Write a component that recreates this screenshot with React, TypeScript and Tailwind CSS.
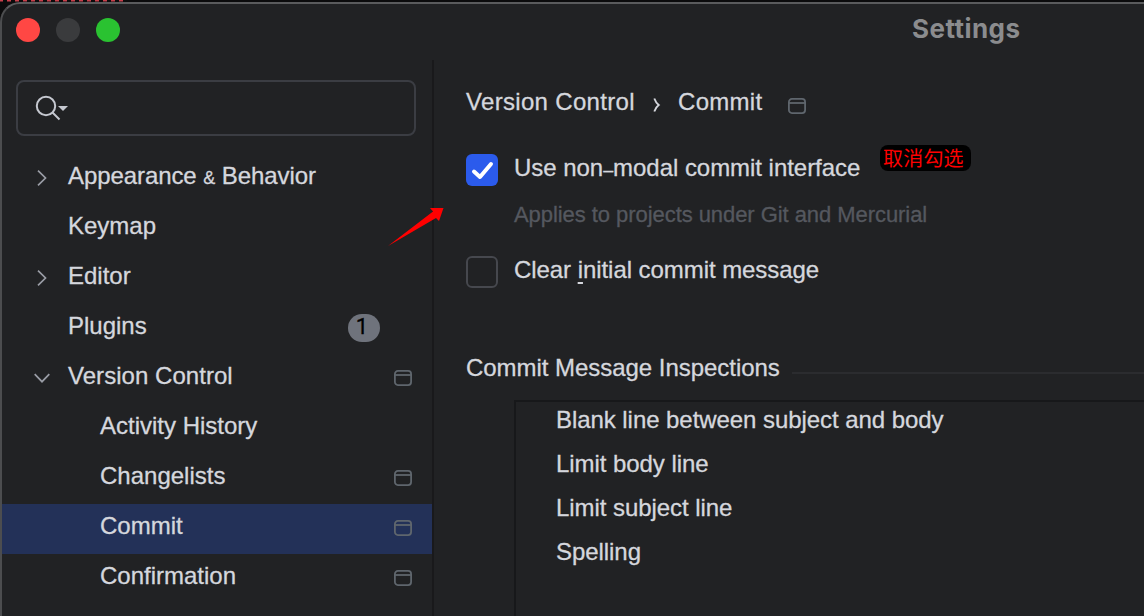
import React from "react";

function WindowIcon() {
  return (
    <svg width="18" height="16" viewBox="0 0 18 16" fill="none" stroke="#5f666d" strokeWidth="1.8" className="block shrink-0">
      <rect x="0.9" y="0.9" width="16.2" height="14.2" rx="3" />
      <path d="M1 5h16" />
    </svg>
  );
}

function Chevron({ open }: { open?: boolean }) {
  return (
    <svg width="16" height="16" viewBox="0 0 16 16" fill="none" stroke="#9a9da6" strokeWidth="1.7" className="block">
      <path d={open ? "M0.7 4.2L8 11.700L15.300 4.200" : "M5 0.700L12.500 8L5 15.300"} transform={open ? undefined : "translate(-1 0)"} />
    </svg>
  );
}

type Item = {
  label: React.ReactNode;
  track?: string;
  arrow?: "open" | "closed";
  child?: boolean;
  icon?: boolean;
  badge?: string;
  selected?: boolean;
};

const items: Item[] = [
  {
    label: (
      <>
        Appearance <span className="text-[18px]">&amp;</span> Behavior
      </>
    ),
    track: "tracking-[-0.080px]",
    arrow: "closed",
  },
  { label: "Keymap" },
  { label: "Editor", arrow: "closed" },
  { label: "Plugins", badge: "1" },
  { label: "Version Control", track: "tracking-[0.040px]", arrow: "open", icon: true },
  { label: "Activity History", child: true },
  { label: "Changelists", child: true, icon: true },
  { label: "Commit", child: true, icon: true, selected: true },
  { label: "Confirmation", child: true, icon: true },
];

function Row({ item }: { item: Item }) {
  return (
    <div className={`flex h-[50px] items-start pr-5 ${item.selected ? "bg-[#233158]" : ""}`}>
      <div className={`flex h-12 shrink-0 items-center pl-8 ${item.child ? "w-[98px]" : "w-[66px]"}`}>
        {item.arrow && <Chevron open={item.arrow === "open"} />}
      </div>
      <span className={`grow leading-[44px] ${item.track ?? ""}`}>{item.label}</span>
      {item.badge && (
        <span className="mr-8 mt-2.5 flex h-7 w-8 justify-center rounded-full bg-[#6f737c] pr-1 font-['Roboto',sans-serif] text-[22px] leading-[26px] text-black">
          {item.badge}
        </span>
      )}
      {item.icon && (
        <div className="flex h-12 items-center">
          <WindowIcon />
        </div>
      )}
    </div>
  );
}

export default function App() {
  return (
    <div className="relative h-[616px] w-[1144px] overflow-hidden bg-[#0b0b0c] pt-0.5 font-['Liberation_Sans',Arial,sans-serif] text-[24px] text-[#d5d7dd] [-webkit-text-stroke:0.3px]">
      <svg className="absolute left-0 top-0" width="124" height="2">
        <path d="M-1 0.800H124" stroke="#c9404c" strokeWidth="1.600" strokeDasharray="4 4" />
      </svg>
      <div className="flex h-[620px] w-[1170px] flex-col rounded-tl-[20px] border-2 border-[#4c4d4f] border-t-[#5a5b5d] bg-[#212224]">
        <header className="flex h-14 shrink-0 items-start">
          <div className="ml-3.5 mt-3.5 flex w-[896px] gap-4">
            <span className="size-6 rounded-full bg-[#ff4744]" />
            <span className="size-6 rounded-full bg-[#3a3b3d]" />
            <span className="size-6 rounded-full bg-[#2ac231]" />
          </div>
          <h1 className="font-['Inter',sans-serif] text-[26px] font-bold leading-[50px] tracking-[0.450px] text-[#8b8c8e] [-webkit-text-stroke:0px]">
            Settings
          </h1>
        </header>

        <div className="flex grow">
          <aside className="w-[432px] shrink-0 border-r-2 border-[#19191b]">
            <div className="ml-3.5 mt-5 flex h-14 w-[400px] items-center rounded-lg border-2 border-[#3b3d43] pl-4">
              <svg width="34" height="26" viewBox="0 0 34 26" fill="none" stroke="#c5c8d0" strokeWidth="2">
                <circle cx="12" cy="11" r="9.200" />
                <path d="M18.500 17.500L25.500 24.500" />
                <path d="M24 11h10l-5 5z" fill="#c5c8d0" stroke="none" />
              </svg>
            </div>
            <nav className="mt-[18px]">
              {items.map((item, i) => (
                <Row key={i} item={item} />
              ))}
            </nav>
          </aside>

          <main className="flex min-w-0 grow flex-col pl-8 pt-5">
            <div className="flex h-11 items-start leading-[44px]">
              <span className="w-[187px] tracking-[0.320px]">Version Control</span>
              <svg className="mt-[18px] mr-[17px] block" width="8" height="14" viewBox="0 0 8 14" fill="none" stroke="#d5d7dd" strokeWidth="1.900">
                <path d="M1.300 0.500Q3 5 5.700 7Q3 9 1.300 13.500" />
              </svg>
              <span className="w-[110px] tracking-[0.300px]">Commit</span>
              <span className="mt-[18px]">
                <WindowIcon />
              </span>
            </div>

            <div className="mt-[22px] flex h-[44px] items-start">
              <span className="mt-2 flex size-8 items-center justify-center rounded-md bg-[#2b5bec]">
                <svg width="32" height="32" viewBox="0 0 32 32" fill="none" stroke="#fff" strokeWidth="4" strokeLinecap="round" strokeLinejoin="round">
                  <path d="M8 17.500L14 23L25 10" />
                </svg>
              </span>
              <span className="ml-4 w-[366px] whitespace-nowrap leading-[44px] tracking-[-0.040px]">
                Use non<span className="text-[18px]">–</span>modal commit interface
              </span>
              <span className="-mt-[1px] h-[26px] w-[91px] rounded-lg bg-black pl-[3px] font-['Noto_Sans_CJK_SC',sans-serif] text-[20px] leading-[25px] tracking-[0.200px] text-[#ff0000] [-webkit-text-stroke:0px]">
                取消勾选
              </span>
            </div>
            <p className="ml-12 mt-[3px] text-[22px] leading-[44px] tracking-[-0.060px] text-[#55585f]">Applies to projects under Git and Mercurial</p>

            <div className="mt-[11px] flex h-[44px] items-start">
              <span className="mt-2 size-8 rounded-md border-2 border-[#46484e]" />
              <span className="ml-4 leading-[44px] tracking-[-0.060px]">
                Clear <span className="underline decoration-2 underline-offset-4">i</span>nitial commit message
              </span>
            </div>

            <div className="mt-[54px] flex h-[44px] items-start">
              <span className="w-[326px] leading-[44px] tracking-[-0.040px]">Commit Message Inspections</span>
              <span className="mt-[26px] h-0.5 grow bg-[#2b2c2f]" />
            </div>

            <ul className="ml-12 mt-2.5 grow border-l-2 border-t-2 border-[#17181a] pl-10 leading-[44px] tracking-[-0.060px]">
              <li className="-mt-[4px]">Blank line between subject and body</li>
              <li>Limit body line</li>
              <li>Limit subject line</li>
              <li>Spelling</li>
            </ul>
          </main>
        </div>
      </div>
      <svg className="absolute left-[388px] top-[206px]" width="58" height="42" viewBox="0 0 58 42">
        <path d="M0 40L45 5.500L42 2L55.500 2L51 15L48 12Z" fill="#ff0000" />
      </svg>
    </div>
  );
}
